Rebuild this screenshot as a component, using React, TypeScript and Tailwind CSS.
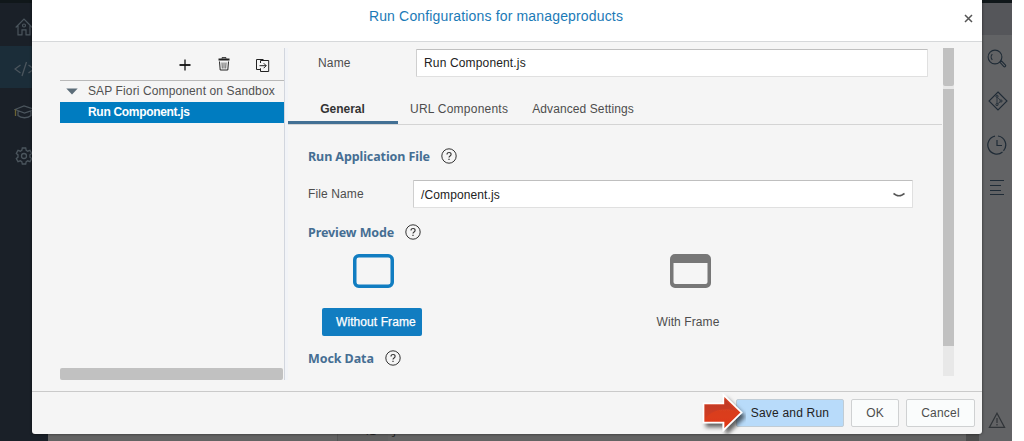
import React from "react";

type Props = { children?: React.ReactNode };

function HomeIcon() {
  return (
    <svg width="18" height="18" viewBox="0 0 18 18" fill="none" stroke="currentColor" strokeWidth="1.2">
      <path d="M.7 9.500 9 1.200l8.300 8.300M3 7.800v9h4.500M15 7.800v9h-4.500M7 16.800v-5h4v5" />
      <circle cx="9" cy="7.500" r="1.500" />
    </svg>
  );
}

function CodeIcon() {
  return (
    <svg width="22" height="16" viewBox="0 0 22 16" fill="none" stroke="currentColor" strokeWidth="1.300">
      <path d="M6.500 4 1 8l5.500 4M14.500 4 20 8l-5.500 4M12.500 1 8 15" />
    </svg>
  );
}

function HatIcon() {
  return (
    <svg width="22" height="14" viewBox="0 0 22 14" fill="none" stroke="currentColor" strokeWidth="1.300">
      <path d="M1 4.500 10 1l10.500 3.500L10.500 8zM4 6v4.500c3 3 10 3 13 0V6" />
      <path d="M1.500 4.500v6.500" stroke="#6b6232" />
    </svg>
  );
}

function GearIcon() {
  return (
    <svg width="18" height="18" viewBox="0 0 18 18" fill="none" stroke="currentColor" strokeWidth="1.300">
      <path d="M7.300 1h3.400l.5 2.300 1.500.9 2.300-.8 1.700 3-1.700 1.500v2.200l1.700 1.500-1.700 3-2.300-.8-1.500.9-.5 2.300H7.300l-.5-2.300-1.500-.9-2.300.8-1.700-3L3 10.100V7.900L1.300 6.400l1.700-3 2.300.8 1.500-.9z" />
      <circle cx="9" cy="9" r="2.500" />
    </svg>
  );
}

function HelpIcon() {
  return (
    <svg width="16" height="16" viewBox="0 0 16 16" fill="none" stroke="#333" strokeWidth="1">
      <circle cx="8" cy="8" r="7.200" />
      <path d="M6 6.400c0-2.500 4.100-2.500 4.100 0C10.100 8 8 7.900 8 9.600" strokeWidth="1.100" />
      <path d="M8 10.800v1.200" strokeWidth="1.200" />
    </svg>
  );
}

function Heading({ children }: Props) {
  return (
    <div className="flex h-5 items-center">
      <h3 className="pt-px pl-px font-['Noto_Sans','Open_Sans',sans-serif] text-[12.500px] leading-5 font-bold tracking-[-0.090px] whitespace-nowrap text-[#456e93]">
        {children}
      </h3>
      <span className="ml-[11px]">
        <HelpIcon />
      </span>
    </div>
  );
}

function Workspace() {
  return (
    <div className="flex h-[441px] flex-col bg-[#10171a] pt-[3px]">
      <div className="flex flex-1">
        <nav className="flex w-12 flex-col bg-[#1a2028] text-[#4b555d]">
          <div className="flex h-[43px] items-center pt-1 pl-[15px]"><HomeIcon /></div>
          <div className="flex h-[42px] items-center bg-[#1b2d39] pt-1 pl-[14px]"><CodeIcon /></div>
          <div className="flex h-11 items-center pt-1 pl-[14px]"><HatIcon /></div>
          <div className="flex h-11 items-center pt-1 pl-[15px]"><GearIcon /></div>
        </nav>
        <main className="flex flex-1 flex-col justify-end bg-[#636363]">
          <div className="flex h-[19px] font-['Liberation_Mono',monospace] text-[11px] leading-[21px] text-[#202020]">
            <div className="w-[290px] border-r border-[#555]" />
            <div className="w-[50px] bg-[#606060] pr-[12px] text-right">41</div>
            <div className="flex-1 pl-[3px]">{"}"}</div>
            <div className="w-[13px] bg-[#4c4c4c]" />
          </div>
        </main>
        <aside className="flex w-[33px] flex-col items-center bg-[#626365] text-[#1f2b36]">
          <div className="h-8 w-full bg-[#55565a]" />
          <svg className="mt-[14px] ml-[3px]" width="20" height="20" viewBox="0 0 20 20" fill="none" stroke="currentColor" strokeWidth="1.100">
            <circle cx="8" cy="8" r="6.900" />
            <path d="M5.300 5.200a4 4 0 0 0 0 5.600" />
            <path d="m13 13.300 1.600-1.300 3.900 4c.8 1-.6 2.400-1.600 1.600z" />
          </svg>
          <svg className="mt-[22px] ml-[4px]" width="20" height="20" viewBox="0 0 20 20" fill="none" stroke="currentColor" strokeWidth="1.100">
            <path d="m10 1 9 9-9 9-9-9z" />
            <path d="M9 6.200v6.300M9.700 6.500l2.500 2.600M9.700 12.800l2.500-1.900" strokeWidth=".8" />
            <circle cx="9" cy="5.200" r="1.100" strokeWidth=".9" />
            <circle cx="9" cy="13.600" r="1.100" strokeWidth=".9" />
            <circle cx="13" cy="10" r="1.100" strokeWidth=".9" />
          </svg>
          <svg className="mt-6 ml-[2px]" width="20" height="20" viewBox="0 0 20 20" fill="none" stroke="currentColor" strokeWidth="1.200">
            <path d="M8 1.200A9 9 0 1 0 15.500 17M11 1a9 9 0 0 1 5.500 14.800M10 5v5.500h5" />
          </svg>
          <svg className="mt-[25px] ml-[2px]" width="16" height="16" viewBox="0 0 16 16" stroke="currentColor" strokeWidth="1">
            <path d="M1 .5h14M1 5.500h11M1 10.500h11M1 14.500h14" />
          </svg>
          <svg className="mt-auto mr-0 mb-3 ml-[3px]" width="18" height="17" viewBox="0 0 18 17" fill="none" stroke="#303438" strokeWidth="1.200">
            <path d="m9 1.200 7.600 14.200H1.400zM9 6v5M9 12v1.500" />
          </svg>
        </aside>
      </div>
    </div>
  );
}

function Tree() {
  return (
    <section className="flex w-[224px] flex-col">
      <div className="flex h-[33px] items-center border-b border-[#b9b9b9] pl-[119px]">
        <svg className="mt-px" width="12" height="12" viewBox="0 0 12 12" stroke="#111"><path d="M6 .5v11" strokeWidth="1.300" /><path d="M.5 6h11" strokeWidth="1.800" /></svg>
        <svg className="ml-[27px]" width="12" height="14" viewBox="0 0 12 14" fill="none" stroke="#222">
          <path d="M.5 2.500h11" strokeWidth="2" />
          <path d="M4 1.500V.7h4v.8M1.500 4.500 2.200 13h7.600l.7-8.500" />
          <path d="M4 5.500l.3 6M6 5.500v6M8 5.500l-.3 6" strokeWidth=".7" />
        </svg>
        <svg className="mt-px ml-[26px]" width="14" height="14" viewBox="0 0 14 14" fill="none" stroke="#222" strokeWidth="1">
          <path d="M4 11.500H.5v-10h7M4.500 5V2.500h8.200V13.500H4.500v-3.200M3.500 7.700h6.700M7.700 5.200l2.500 2.500-2.500 2.500" />
        </svg>
      </div>
      <div className="flex h-[21px] items-center pb-px pl-[6px] text-[#515151]">
        <svg width="12" height="7" viewBox="0 0 12 7" fill="#5c6d79"><path d="M.3.500h11.400L6 6.500z" /></svg>
        <span className="ml-[10px] tracking-[0.120px] whitespace-nowrap">SAP Fiori Component on Sandbox</span>
      </div>
      <div className="h-[21px] bg-[#007cc0] pl-7 leading-[20px] font-bold tracking-[-0.310px] text-white">Run Component.js</div>
      <div className="mt-auto h-3 w-[223px] rounded-[2px] bg-[#c1c1c1]" />
    </section>
  );
}

function Settings() {
  return (
    <section className="flex w-[655px] flex-col">
      <div className="flex h-[29px] items-center pl-[30px]">
        <label className="w-[98px] tracking-[0.150px]">Name</label>
        <div className="mt-[1px] h-7 w-[512px] rounded-[1px] border border-[#e0e0e0] border-t-[#bfbfbf] border-l-[#cfcfcf] bg-white pl-[7px] leading-[26px] tracking-[0.150px] text-[#222]">
          Run Component.js
        </div>
      </div>
      <div className="mt-[15px] flex h-[33px] w-[654px] border-b border-[#d4d4d4]">
        <div className="h-8 w-[110px] border-b-[3px] border-[#427094] pr-px text-center leading-[34px] font-bold text-[#333]">General</div>
        <div className="pl-3 leading-[34px] tracking-[0.230px]">URL Components</div>
        <div className="pl-6 leading-[34px] tracking-[0.100px]">Advanced Settings</div>
      </div>
      <div className="flex flex-col pt-[21px] pl-[19px]">
        <Heading>Run Application File</Heading>
        <div className="mt-[14px] flex h-[28px] items-center">
          <label className="w-[106px] pl-px tracking-[0.120px]">File Name</label>
          <div className="flex h-7 w-[500px] items-center justify-between rounded-[1px] border border-[#e0e0e0] border-t-[#bfbfbf] border-l-[#cfcfcf] bg-white pr-[7px] pl-[7px] tracking-[0.120px] text-[#222]">
            <span className="pt-[2px]">/Component.js</span>
            <svg className="mt-[2px]" width="12" height="6" viewBox="0 0 12 6" fill="none" stroke="#555" strokeWidth="1.500"><path d="M.5 1.500 3 3q3 1.500 6 0l2.500-1.500" /></svg>
          </div>
        </div>
        <div className="mt-[14px]"><Heading>Preview Mode</Heading></div>
        <div className="mt-3 flex">
          <div className="ml-[15px] flex w-[100px] flex-col items-center">
            <svg className="ml-[3px]" width="41" height="34" viewBox="0 0 41 34"><rect x="1.750" y="1.750" width="37.500" height="30.500" rx="4" fill="none" stroke="#117dc1" strokeWidth="3.500" /></svg>
            <div className="mt-5 h-7 w-full rounded-[2px] bg-[#117dc1] pl-[14px] leading-7 tracking-[0.080px] whitespace-nowrap text-white [-webkit-text-stroke:0.250px_white]">Without Frame</div>
          </div>
          <div className="ml-[216px] flex w-[100px] flex-col items-center">
            <svg className="ml-[4px]" width="41" height="34" viewBox="0 0 41 34"><path fill="#777" fillRule="evenodd" d="M5 0h31a5 5 0 0 1 5 5v24a5 5 0 0 1-5 5H5a5 5 0 0 1-5-5V5a5 5 0 0 1 5-5M3.500 9v19q0 2 2 2h30q2 0 2-2V9z" /></svg>
            <div className="mt-5 h-7 leading-7 tracking-[0.100px]">With Frame</div>
          </div>
        </div>
        <div className="mt-3"><Heading>Mock Data</Heading></div>
      </div>
    </section>
  );
}

function RunDialog() {
  return (
    <div role="dialog" className="absolute top-0 left-8 flex h-[434px] w-[950px] flex-col overflow-hidden rounded-b-[3px] bg-[#f5f5f5] shadow-[0_0_3px_rgba(0,0,0,0.6)]">
      <header className="flex h-[42px] shrink-0 justify-center border-b border-[#d6d8da] bg-white">
        <h2 className="flex-1 pt-[6px] pr-1 text-center text-[14px] leading-5 tracking-[0.160px] text-[#1b7ab7]">Run Configurations for manageproducts</h2>
        <svg className="mt-[14px] mr-[9px]" width="9" height="9" viewBox="0 0 9 9" stroke="#555" strokeWidth="1.500"><path d="m1 1 7 7M8 1 1 8" /></svg>
      </header>
      <div className="flex h-[349px] pt-[6px] pb-[11px] pl-7">
        <Tree />
        <div className="w-1 border-l border-[#d2d6de] bg-[#f1f3f7]" />
        <Settings />
        <div className="flex h-[328px] w-[11px] flex-col gap-[3px] bg-[#e8e8e8]">
          <div className="h-[38px] rounded-b-[2px] bg-[#c1c1c1]" />
          <div className="h-[257px] bg-[#c1c1c1]" />
        </div>
      </div>
      <footer className="relative flex flex-1 justify-end gap-[7px] border-t border-[#cacaca] pt-[7px] pr-[7px] text-center leading-[26px] tracking-[0.200px]">
        <div className="h-7 w-[108px] rounded-[2px] border border-[#c0ccd5] bg-[#b8dbfa] text-[#222]">Save and Run</div>
        <div className="h-7 w-12 rounded-[2px] border border-[#cfd1d2] bg-[#fafcfc]">OK</div>
        <div className="h-7 w-[69px] rounded-[2px] border border-[#cfd1d2] bg-[#fafcfc]">Cancel</div>
        <svg className="absolute top-0 left-[668px]" width="48" height="43" viewBox="0 0 48 43">
          <defs>
            <linearGradient id="arrowFill" x2="0" y2="1"><stop stopColor="#d34629" /><stop offset="1" stopColor="#e03614" /></linearGradient>
            <linearGradient id="arrowGloss" x2="0" y2="1"><stop stopColor="#bd3a28" /><stop offset="1" stopColor="#d33c20" /></linearGradient>
            <filter id="arrowShadow"><feDropShadow dx="3" dy="4" stdDeviation="2" floodColor="#000" floodOpacity=".6" /></filter>
          </defs>
          <path d="M3.500 11.300h20V3L41.500 20.500l-18 17.500V30.500h-20z" fill="url(#arrowFill)" stroke="white" strokeWidth="1.700" filter="url(#arrowShadow)" />
          <path d="M5 13h19.500V6.500L37 19C23 15 12 18 5 27z" fill="url(#arrowGloss)" />
        </svg>
      </footer>
    </div>
  );
}

export default function App() {
  return (
    <div className="h-[441px] w-[1024px] overflow-hidden bg-white font-['Liberation_Sans',Arial,sans-serif] text-[12px] leading-4 text-[#4d4d4d]">
      <div className="relative h-[441px] w-[1012px] overflow-hidden">
        <Workspace />
        <RunDialog />
      </div>
    </div>
  );
}
